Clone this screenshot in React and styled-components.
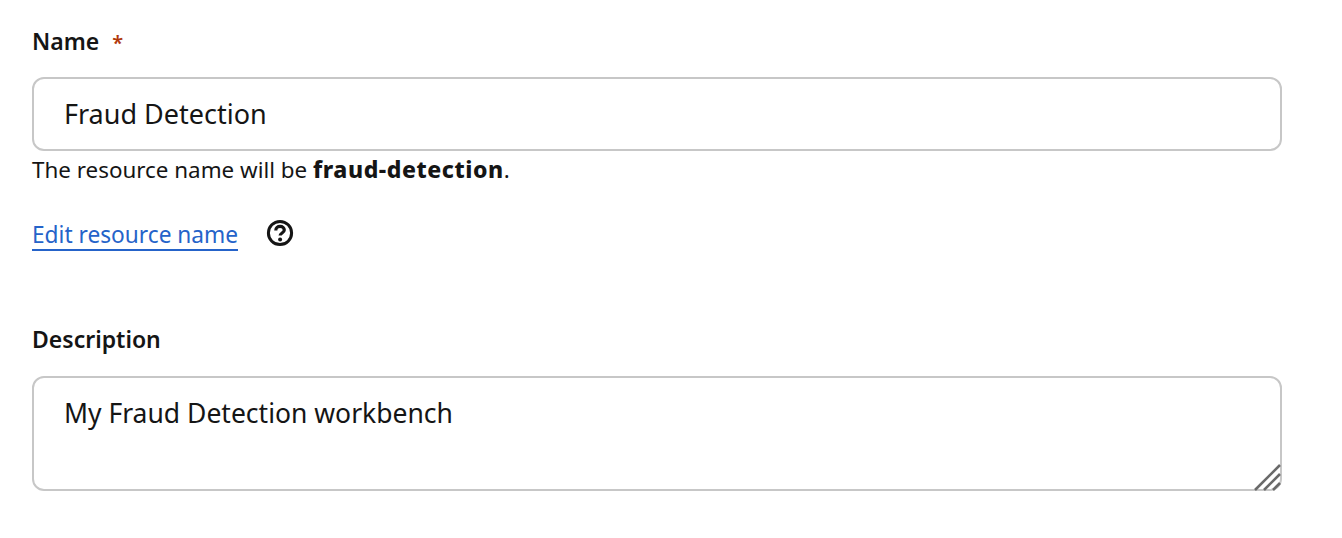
import React from "react";
import styled, { createGlobalStyle } from "styled-components";

const Global = createGlobalStyle`
  html, body { margin: 0; padding: 0; background: #fff; }
  body { font-family: "Noto Sans", "Liberation Sans", sans-serif; color: #151515; }
`;

const Form = styled.form`
  width: 1250px;
  padding: 24px 0 0 32px;
  display: flex;
  flex-direction: column;
`;

const Group = styled.div`
  display: flex;
  flex-direction: column;
  margin-bottom: ${(p) => p.$after || 0}px;
`;

const Label = styled.label`
  display: flex;
  align-items: baseline;
  font-size: 23px;
  line-height: 34px;
  font-weight: 600;
  height: 34px;
  margin-bottom: ${(p) => p.$gap}px;
`;

const Required = styled.span`
  color: #b1380b;
  margin-left: 13px;
  font-size: 20px;
  font-weight: 600;
`;

const TextField = styled.input`
  box-sizing: border-box;
  width: 100%;
  height: 74px;
  padding: 0 30px 2px;
  border: 2px solid #c7c7c7;
  border-radius: 12px;
  outline: none;
  background: #fff;
  color: #151515;
  font: 400 27px "Noto Sans", sans-serif;
`;

const Help = styled.div`
  font-size: 22.4px;
  line-height: 34px;
  margin-top: 1px;
  strong { font-weight: 800; font-size: 23px; letter-spacing: 0.55px; }
`;

const LinkRow = styled.div`
  display: flex;
  align-items: center;
  gap: 28px;
  margin-top: 31px;
  height: 34px;
`;

const EditLink = styled.a`
  color: #2563c9;
  font-size: 22.7px;
  line-height: 28px;
  margin-top: 1px;
  text-decoration: none;
  border-bottom: 2px solid #2563c9;
`;

const AreaWrap = styled.div`
  position: relative;
  height: 115px;
`;

const TextArea = styled.textarea`
  box-sizing: border-box;
  display: block;
  width: 100%;
  height: 100%;
  padding: 16px 30px;
  border: 2px solid #c7c7c7;
  border-radius: 12px;
  outline: none;
  resize: none;
  background: #fff;
  color: #151515;
  font: 400 26.5px/38px "Noto Sans", sans-serif;
`;

const Grip = styled.svg`
  position: absolute;
  right: 0;
  bottom: 0;
`;

const QuestionIcon = styled.svg`
  flex: none;
  margin-top: -4px;
`;

function HelpIcon() {
  return (
    <QuestionIcon width="28" height="28" viewBox="0 0 28 28" aria-hidden="true">
      <circle cx="14" cy="14" r="11.6" fill="none" stroke="#151515" strokeWidth="3" />
      <path d="M9.8 11.4c0-2.5 1.9-4 4.3-4s4.2 1.5 4.2 3.6c0 2.9-4.2 3-4.2 5.6" fill="none" stroke="#151515" strokeWidth="3.2" />
      <circle cx="14.1" cy="20.4" r="2" fill="#151515" />
    </QuestionIcon>
  );
}

export default function App() {
  return (
    <>
      <Global />
      <Form>
        <Group $after={70}>
          <Label $gap={19}>Name<Required>*</Required></Label>
          <TextField defaultValue="Fraud Detection" />
          <Help>The resource name will be <strong>fraud-detection</strong>.</Help>
          <LinkRow>
            <EditLink href="#">Edit resource name</EditLink>
            <HelpIcon />
          </LinkRow>
        </Group>
        <Group>
          <Label $gap={20}>Description</Label>
          <AreaWrap>
            <TextArea defaultValue="My Fraud Detection workbench" />
            <Grip width="28" height="28" viewBox="0 0 28 28" aria-hidden="true">
              <path d="M1 27 26 2M10 27 26 11M19 27 26 20" stroke="#6a6a6a" strokeWidth="2.6" fill="none" />
            </Grip>
          </AreaWrap>
        </Group>
      </Form>
    </>
  );
}
